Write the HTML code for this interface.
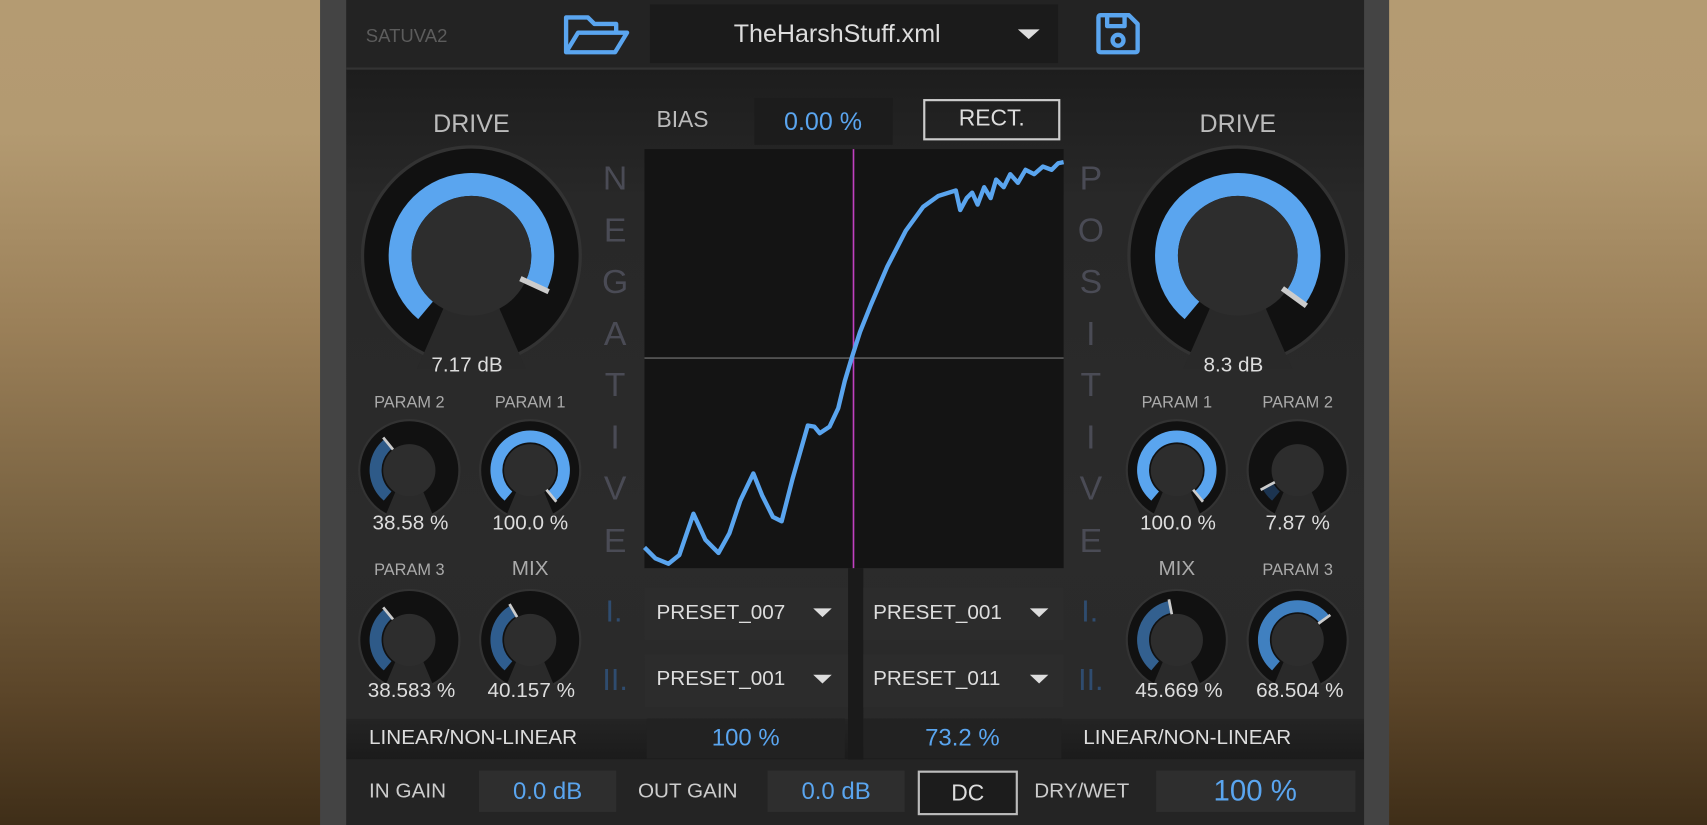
<!DOCTYPE html>
<html><head><meta charset="utf-8"><style>
html,body{margin:0;padding:0;width:1707px;height:825px;overflow:hidden;background:#6e5535}
#w{position:absolute;left:0;top:0;width:1568px;height:758px;transform:scale(1.08865,1.0884);transform-origin:0 0;
background:linear-gradient(#b49b72 0%,#b39a71 16%,#9a7f58 40%,#76603f 65%,#5a4428 85%,#3f2e18 100%);font-family:"Liberation Sans",sans-serif}
.t{position:absolute;white-space:nowrap;transform:translate(-50%,-50%);line-height:1;z-index:2}
.l{position:absolute;white-space:nowrap;transform:translateY(-50%);line-height:1;z-index:2}
.box{position:absolute}
.b{color:#5aa5ef}
.v{position:absolute;z-index:2}
svg{z-index:1}
</style></head><body><div id="w">
<div class="box" style="left:294px;top:0;width:982px;height:758px;background:#444"></div>
<div class="box" style="left:318px;top:0;width:935px;height:62px;background:#232323;border-bottom:2px solid #333"></div>
<div class="box" style="left:318px;top:64px;width:935px;height:596px;background:linear-gradient(#1d1d1d,#282828 20%,#2b2b2b 70%,#2a2a2a)"></div>
<div class="box" style="left:318px;top:660px;width:935px;height:38px;background:linear-gradient(#242424,#1b1b1b)"></div>
<div class="box" style="left:318px;top:698px;width:935px;height:60px;background:#242424"></div>
<!-- header -->
<div class="l" style="left:336px;top:33px;font-size:17px;color:#5c5c5c">SATUVA2</div>
<div class="box" style="left:597px;top:4px;width:375px;height:54px;background:#1b1b1b"></div>
<div class="t" style="left:769px;top:31px;font-size:23px;color:#ddd">TheHarshStuff.xml</div>
<!-- center top -->
<div class="l" style="left:603px;top:110px;font-size:21px;color:#bbb">BIAS</div>
<div class="box" style="left:693px;top:90px;width:127px;height:43px;background:#1c1c1c"></div>
<div class="t b" style="left:756px;top:112px;font-size:23px">0.00 %</div>
<div class="box" style="left:848px;top:91px;width:122px;height:34px;border:2px solid #ccc"></div>
<div class="t" style="left:911px;top:109px;font-size:21px;color:#ddd">RECT.</div>
<div class="box" style="left:592px;top:137px;width:385px;height:385px;background:#141414"></div>
<div class="box" style="left:779px;top:522px;width:14px;height:176px;background:#1a1a1a"></div>
<div class="box" style="left:592px;top:540px;width:187px;height:48px;background:#2c2c2c"></div>
<div class="box" style="left:592px;top:601px;width:187px;height:49px;background:#2c2c2c"></div>
<div class="box" style="left:793px;top:540px;width:184px;height:48px;background:#2c2c2c"></div>
<div class="box" style="left:793px;top:601px;width:184px;height:49px;background:#2c2c2c"></div>
<div class="l" style="left:603px;top:563px;font-size:19px;color:#ddd">PRESET_007</div>
<div class="l" style="left:603px;top:624px;font-size:19px;color:#ddd">PRESET_001</div>
<div class="l" style="left:802px;top:563px;font-size:19px;color:#ddd">PRESET_001</div>
<div class="l" style="left:802px;top:624px;font-size:19px;color:#ddd">PRESET_011</div>
<div class="box" style="left:594px;top:660px;width:182px;height:37px;background:#222"></div>
<div class="box" style="left:793px;top:660px;width:182px;height:37px;background:#222"></div>
<div class="t b" style="left:685px;top:678px;font-size:22px">100 %</div>
<div class="t b" style="left:884px;top:678px;font-size:22px">73.2 %</div>
<!-- vertical letters -->
<div class="v" style="left:550px;top:140px;width:30px;text-align:center;font-size:31px;line-height:47.5px;color:#4a4b55">N<br>E<br>G<br>A<br>T<br>I<br>V<br>E</div>
<div class="v" style="left:987px;top:140px;width:30px;text-align:center;font-size:31px;line-height:47.5px;color:#4a4b55">P<br>O<br>S<br>I<br>T<br>I<br>V<br>E</div>
<div class="t" style="left:564px;top:562px;font-size:28px;color:#2f4c6f">I.</div>
<div class="t" style="left:565px;top:625px;font-size:28px;color:#2f4c6f">II.</div>
<div class="t" style="left:1001px;top:562px;font-size:28px;color:#2f4c6f">I.</div>
<div class="t" style="left:1002px;top:625px;font-size:28px;color:#2f4c6f">II.</div>
<!-- left labels -->
<div class="t" style="left:433px;top:114px;font-size:23px;color:#bbb">DRIVE</div>
<div class="t" style="left:429px;top:336px;font-size:19px;color:#ddd">7.17 dB</div>
<div class="t" style="left:376px;top:370px;font-size:15px;color:#aaa">PARAM 2</div>
<div class="t" style="left:487px;top:370px;font-size:15px;color:#aaa">PARAM 1</div>
<div class="t" style="left:377px;top:481px;font-size:19px;color:#ddd">38.58 %</div>
<div class="t" style="left:487px;top:481px;font-size:19px;color:#ddd">100.0 %</div>
<div class="t" style="left:376px;top:524px;font-size:15px;color:#aaa">PARAM 3</div>
<div class="t" style="left:487px;top:523px;font-size:19px;color:#aaa">MIX</div>
<div class="t" style="left:378px;top:635px;font-size:19px;color:#ddd">38.583 %</div>
<div class="t" style="left:488px;top:635px;font-size:19px;color:#ddd">40.157 %</div>
<div class="l" style="left:339px;top:678px;font-size:19px;color:#ddd">LINEAR/NON-LINEAR</div>
<!-- right labels -->
<div class="t" style="left:1137px;top:114px;font-size:23px;color:#bbb">DRIVE</div>
<div class="t" style="left:1133px;top:336px;font-size:19px;color:#ddd">8.3 dB</div>
<div class="t" style="left:1081px;top:370px;font-size:15px;color:#aaa">PARAM 1</div>
<div class="t" style="left:1192px;top:370px;font-size:15px;color:#aaa">PARAM 2</div>
<div class="t" style="left:1082px;top:481px;font-size:19px;color:#ddd">100.0 %</div>
<div class="t" style="left:1192px;top:481px;font-size:19px;color:#ddd">7.87 %</div>
<div class="t" style="left:1081px;top:523px;font-size:19px;color:#aaa">MIX</div>
<div class="t" style="left:1192px;top:524px;font-size:15px;color:#aaa">PARAM 3</div>
<div class="t" style="left:1083px;top:635px;font-size:19px;color:#ddd">45.669 %</div>
<div class="t" style="left:1194px;top:635px;font-size:19px;color:#ddd">68.504 %</div>
<div class="l" style="left:995px;top:678px;font-size:19px;color:#ddd">LINEAR/NON-LINEAR</div>
<!-- bottom bar -->
<div class="l" style="left:339px;top:727px;font-size:19px;color:#ccc">IN GAIN</div>
<div class="box" style="left:440px;top:708px;width:126px;height:38px;background:#2e2e2e"></div>
<div class="t b" style="left:503px;top:727px;font-size:22px">0.0 dB</div>
<div class="l" style="left:586px;top:727px;font-size:19px;color:#ccc">OUT GAIN</div>
<div class="box" style="left:705px;top:708px;width:126px;height:38px;background:#2e2e2e"></div>
<div class="t b" style="left:768px;top:727px;font-size:22px">0.0 dB</div>
<div class="box" style="left:843px;top:708px;width:88px;height:37px;border:2px solid #bbb;background:#1c1c1c"></div>
<div class="t" style="left:889px;top:729px;font-size:21px;color:#ddd">DC</div>
<div class="l" style="left:950px;top:727px;font-size:19px;color:#ccc">DRY/WET</div>
<div class="box" style="left:1062px;top:708px;width:183px;height:38px;background:#2e2e2e"></div>
<div class="t b" style="left:1153px;top:727px;font-size:27px">100 %</div>

<svg style="position:absolute;left:0;top:0" width="1568" height="758" viewBox="0 0 1568 758">
<defs>
<g id="bigbase"><circle r="100" fill="#111" stroke="#333" stroke-width="3"/><polygon points="-22,40 22,40 50,104 -50,104" fill="#292929"/></g>
<g id="smbase"><circle r="46" fill="#111" stroke="#333" stroke-width="2"/><polygon points="-12,18 12,18 25,49 -25,49" fill="#2a2a2a"/></g>
</defs>
<g fill="none" stroke="#5aa5ef" stroke-width="4" stroke-linejoin="round">
<path d="M520,48 V16 H540 L546,22 H566 V30"/><path d="M520,48 L531,30 H576 L565,48 Z"/>
<path d="M1011,14 H1037 L1045,22 V46 Q1045,48 1043,48 H1011 Q1009,48 1009,46 V16 Q1009,14 1011,14 Z"/>
<rect x="1017" y="14" width="16" height="10"/><circle cx="1027" cy="37" r="5"/>
</g>
<path d="M935,27 L955,27 L945,36 Z" fill="#ddd"/>
<line x1="592" y1="329" x2="977" y2="329" stroke="#666" stroke-width="1.2"/>
<line x1="784" y1="137" x2="784" y2="522" stroke="#c040c0" stroke-width="1.5"/>
<path d="M592,503 L602,513 L614,518 L624,510 L637,472 L648,496 L660,508 L670,490 L680,460 L692,435 L700,455 L710,475 L718,479 L728,440 L742,391 L748,392 L753,398 L762,392 L770,375 L776,350 L782,330 L790,305 L800,280 L815,245 L832,212 L848,190 L862,180 L878,175 L882,193 L888,182 L893,177 L898,188 L904,172 L910,182 L915,165 L922,172 L928,160 L935,168 L942,156 L950,160 L958,153 L966,156 L972,150 L977,149" fill="none" stroke="#5aa5ef" stroke-width="4" stroke-linejoin="round"/>
<g fill="#ddd"><path d="M747,559 h17 l-8.5,8 z"/><path d="M747,620 h17 l-8.5,8 z"/><path d="M946,559 h17 l-8.5,8 z"/><path d="M946,620 h17 l-8.5,8 z"/></g>
<g transform="translate(433,235)"><use href="#bigbase"/>
<circle r="65.5" fill="none" stroke="#5aa5ef" stroke-width="21" pathLength="360" stroke-dasharray="255 400" transform="rotate(130)"/>
<circle r="55" fill="#2d2d2d"/><line x1="45" y1="21" x2="71" y2="33" stroke="#ccc" stroke-width="5"/></g>
<g transform="translate(1137,235)"><use href="#bigbase"/>
<circle r="65.5" fill="none" stroke="#5aa5ef" stroke-width="21" pathLength="360" stroke-dasharray="266 400" transform="rotate(130)"/>
<circle r="55" fill="#2d2d2d"/><line x1="41" y1="30" x2="63" y2="46" stroke="#ccc" stroke-width="5"/></g>
<g transform="translate(376,432)"><use href="#smbase"/>
<circle r="31" fill="none" stroke="#2e5a88" stroke-width="11" pathLength="360" stroke-dasharray="101 400" transform="rotate(130)"/>
<circle r="24" fill="#2d2d2d"/><line x1="-15" y1="-19" x2="-24" y2="-30" stroke="#ccc" stroke-width="2.5"/></g>
<g transform="translate(487,432)"><use href="#smbase"/>
<circle r="31" fill="none" stroke="#5aa5ef" stroke-width="11" pathLength="360" stroke-dasharray="280 400" transform="rotate(130)"/>
<circle r="24" fill="#2d2d2d"/><line x1="15" y1="18" x2="24" y2="29" stroke="#ccc" stroke-width="2.5"/></g>
<g transform="translate(376,588)"><use href="#smbase"/>
<circle r="31" fill="none" stroke="#2e5a88" stroke-width="11" pathLength="360" stroke-dasharray="101 400" transform="rotate(130)"/>
<circle r="24" fill="#2d2d2d"/><line x1="-15" y1="-19" x2="-24" y2="-30" stroke="#ccc" stroke-width="2.5"/></g>
<g transform="translate(487,588)"><use href="#smbase"/>
<circle r="31" fill="none" stroke="#2f5d8e" stroke-width="11" pathLength="360" stroke-dasharray="110 400" transform="rotate(130)"/>
<circle r="24" fill="#2d2d2d"/><line x1="-12" y1="-21" x2="-19" y2="-33" stroke="#ccc" stroke-width="2.5"/></g>
<g transform="translate(1081,432)"><use href="#smbase"/>
<circle r="31" fill="none" stroke="#5aa5ef" stroke-width="11" pathLength="360" stroke-dasharray="280 400" transform="rotate(130)"/>
<circle r="24" fill="#2d2d2d"/><line x1="15" y1="18" x2="24" y2="29" stroke="#ccc" stroke-width="2.5"/></g>
<g transform="translate(1192,432)"><use href="#smbase"/>
<circle r="31" fill="none" stroke="#1c3450" stroke-width="11" pathLength="360" stroke-dasharray="22 400" transform="rotate(130)"/>
<circle r="24" fill="#2d2d2d"/><line x1="-21" y1="11" x2="-34" y2="18" stroke="#ccc" stroke-width="2.5"/></g>
<g transform="translate(1081,588)"><use href="#smbase"/>
<circle r="31" fill="none" stroke="#33608f" stroke-width="11" pathLength="360" stroke-dasharray="129 400" transform="rotate(130)"/>
<circle r="24" fill="#2d2d2d"/><line x1="-4.6" y1="-23.6" x2="-7.3" y2="-37.3" stroke="#ccc" stroke-width="2.5"/></g>
<g transform="translate(1192,588)"><use href="#smbase"/>
<circle r="31" fill="none" stroke="#4080c0" stroke-width="11" pathLength="360" stroke-dasharray="192 400" transform="rotate(130)"/>
<circle r="24" fill="#2d2d2d"/><line x1="19" y1="-15" x2="30" y2="-23" stroke="#ccc" stroke-width="2.5"/></g>
</svg>
</div></body></html>
